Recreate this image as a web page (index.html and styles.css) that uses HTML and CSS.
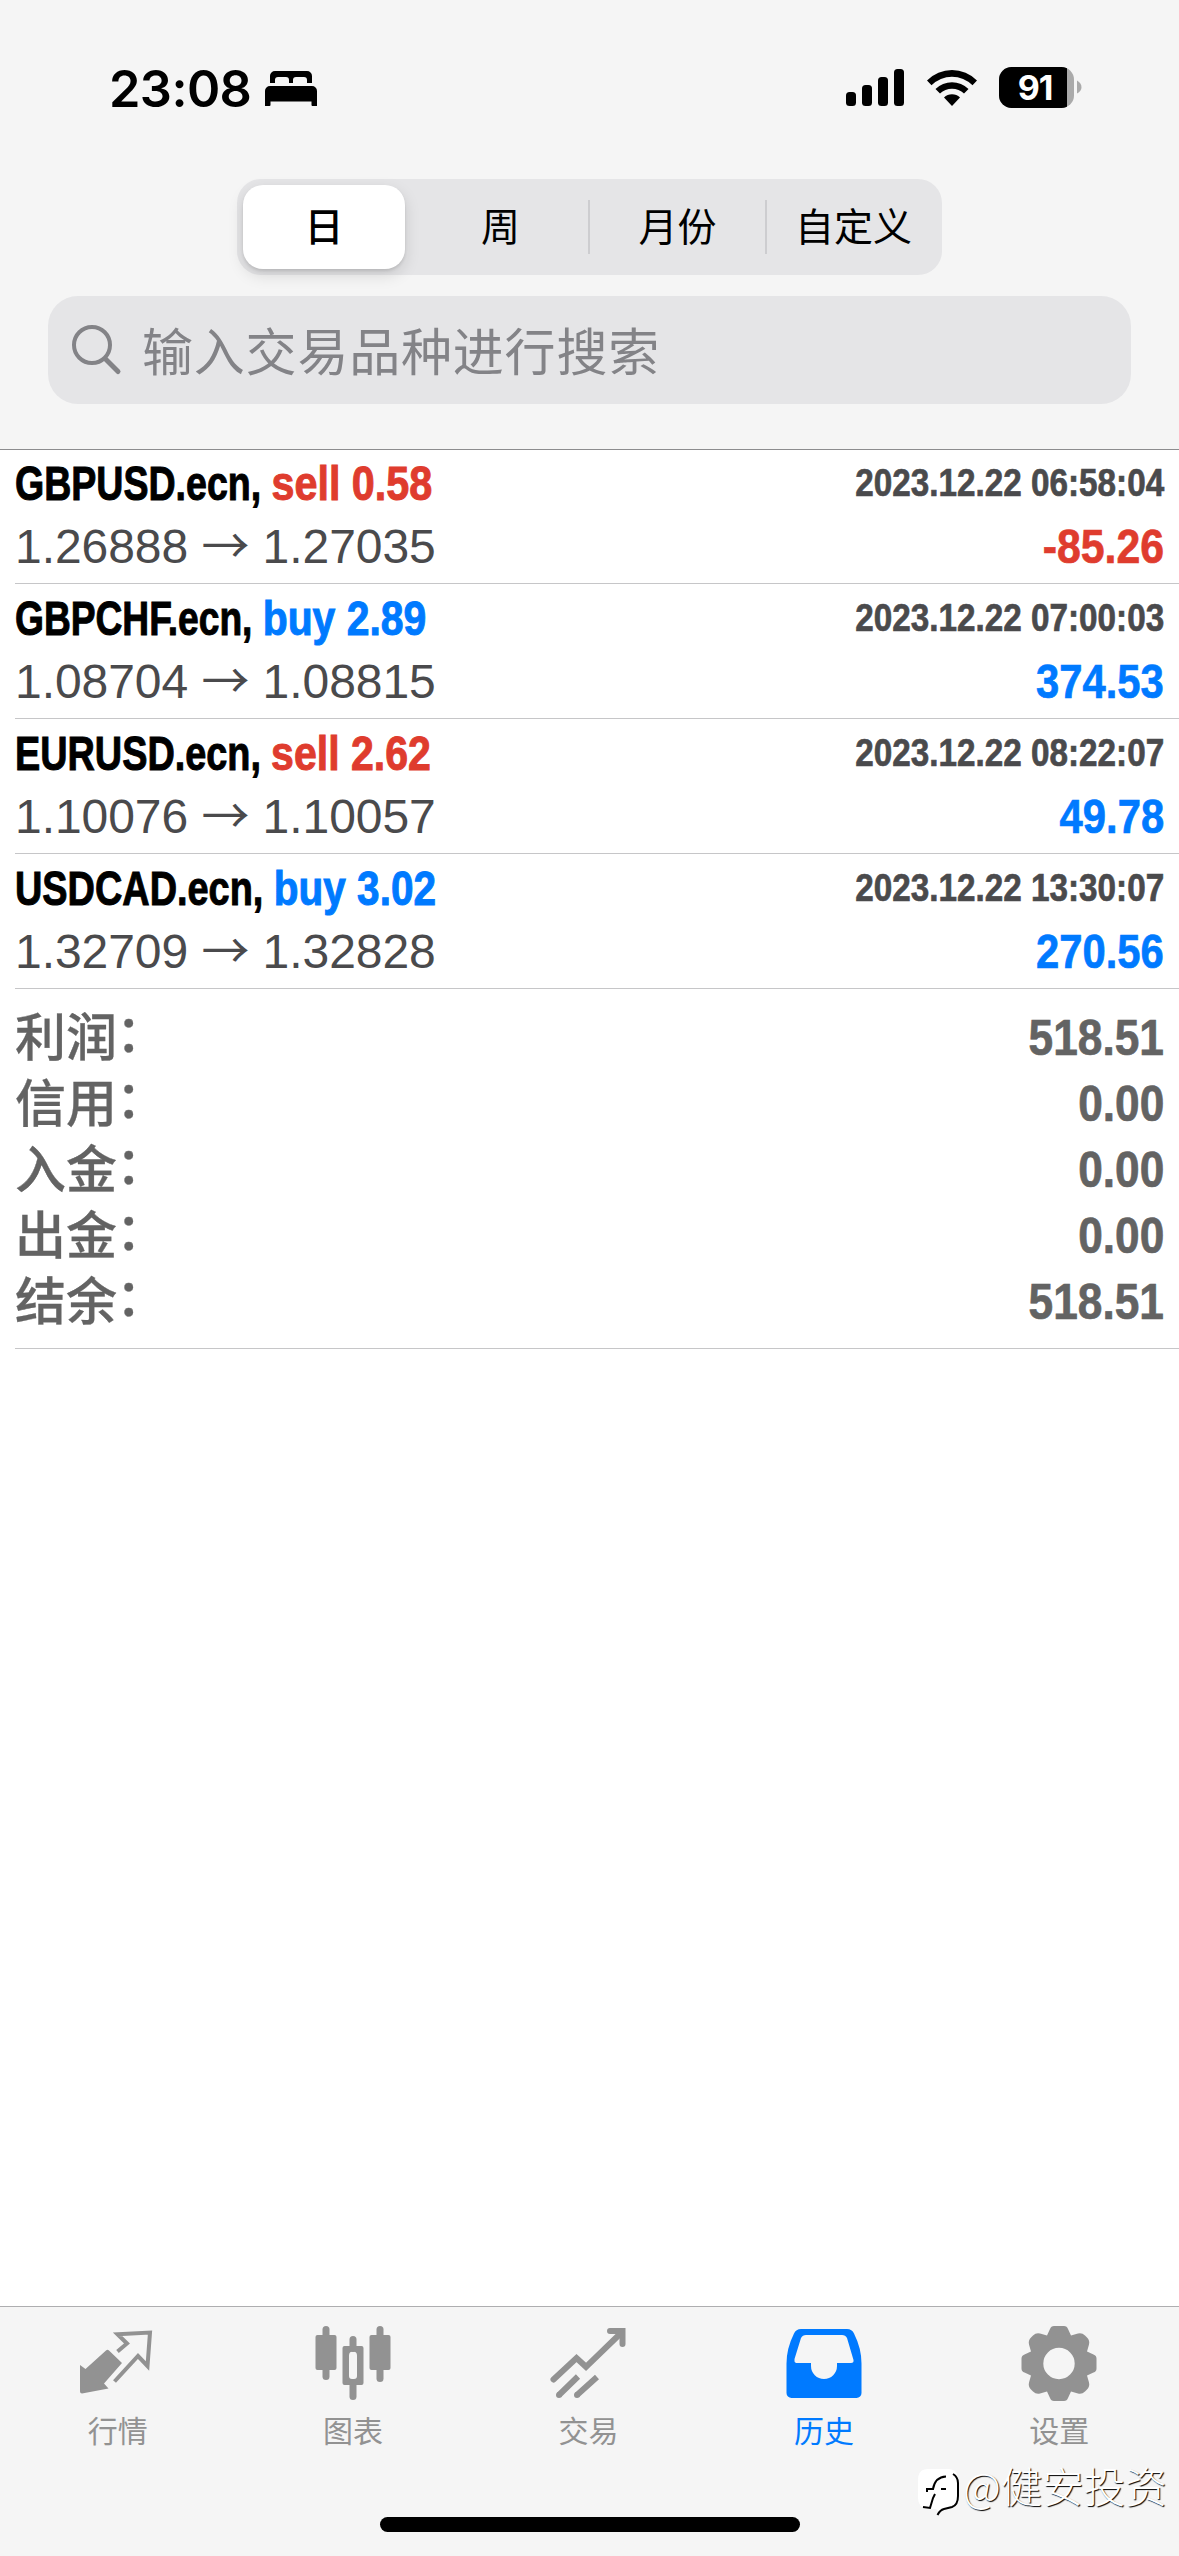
FILE: index.html
```html
<!DOCTYPE html>
<html lang="zh-CN">
<head>
<meta charset="utf-8">
<title>历史</title>
<link rel="stylesheet" href="styles.css">
</head>
<body>
<div class="screen">
  <header class="top">
    <div class="status">
      <span class="clock">23:08</span>
      <svg class="bed" width="52" height="36" viewBox="0 0 52 36"><path d="M5 12V5a5 5 0 0 1 5-5h32a5 5 0 0 1 5 5v7h-5V9a3 3 0 0 0-3-3h-8a3 3 0 0 0-3 3v3h-4V9a3 3 0 0 0-3-3h-8a3 3 0 0 0-3 3v3z"/><path d="M0 35V20a5 5 0 0 1 5-5h42a5 5 0 0 1 5 5v15h-4.500a1 1 0 0 1-1-1v-3.500h-41V34a1 1 0 0 1-1 1z"/></svg>
      <span class="grow"></span>
      <svg class="signal" width="58" height="37" viewBox="0 0 58 37"><rect x="0" y="23" width="10" height="14" rx="3.500"/><rect x="16" y="16" width="10" height="21" rx="3.500"/><rect x="32" y="8" width="10" height="29" rx="3.500"/><rect x="48" y="0" width="10" height="37" rx="3.500"/></svg>
      <svg class="wifi" width="50" height="37" viewBox="0 0 50 37"><path d="M0 11.500a35 35 0 0 1 50 0l-4.500 4.700a29 29 0 0 0-41 0z"/><path d="M8.500 20a23.500 23.500 0 0 1 33 0L37 24.600a17 17 0 0 0-24 0z"/><path d="M17 28.500a11.500 11.500 0 0 1 16 0L25 37z"/></svg>
      <svg class="battery" width="83" height="41" viewBox="0 0 83 41"><defs><clipPath id="b"><rect width="75" height="41" rx="12.500"/></clipPath></defs><g clip-path="url(#b)"><rect width="75" height="41" fill="#aaa"/><rect width="68" height="41"/></g><path d="M78 13.500c6 3.500 6 10 0 13z" fill="#aaa"/><text x="36" y="33" text-anchor="middle" class="level">91</text></svg>
    </div>
    <div class="segments">
      <span class="seg on">日</span><span class="seg">周</span><span class="seg line">月份</span><span class="seg line">自定义</span>
    </div>
    <div class="search">
      <svg width="50" height="50" viewBox="0 0 50 50" fill="none" stroke="#838387" stroke-linecap="round"><circle cx="20" cy="20" r="18" stroke-width="4"/><path d="M33.500 34L46 46.500" stroke-width="5"/></svg>
      <span>输入交易品种进行搜索</span>
    </div>
  </header>
  <main>
    <div class="deal"><div class="l"><b class="name">GBPUSD.ecn, <i class="sell">sell 0.58</i></b><time>2023.12.22 06:58:04</time></div><div class="l"><span class="price">1.26888 <span class="arrow">→</span> 1.27035</span><b class="sell">-85.26</b></div></div>
    <div class="deal"><div class="l"><b class="name">GBPCHF.ecn, <i class="buy">buy 2.89</i></b><time>2023.12.22 07:00:03</time></div><div class="l"><span class="price">1.08704 <span class="arrow">→</span> 1.08815</span><b class="buy">374.53</b></div></div>
    <div class="deal"><div class="l"><b class="name">EURUSD.ecn, <i class="sell">sell 2.62</i></b><time>2023.12.22 08:22:07</time></div><div class="l"><span class="price">1.10076 <span class="arrow">→</span> 1.10057</span><b class="buy">49.78</b></div></div>
    <div class="deal"><div class="l"><b class="name">USDCAD.ecn, <i class="buy">buy 3.02</i></b><time>2023.12.22 13:30:07</time></div><div class="l"><span class="price">1.32709 <span class="arrow">→</span> 1.32828</span><b class="buy">270.56</b></div></div>
    <div class="totals">
      <div class="t"><span>利润<em>：</em></span><b>518.51</b></div>
      <div class="t"><span>信用<em>：</em></span><b>0.00</b></div>
      <div class="t"><span>入金<em>：</em></span><b>0.00</b></div>
      <div class="t"><span>出金<em>：</em></span><b>0.00</b></div>
      <div class="t"><span>结余<em>：</em></span><b>518.51</b></div>
    </div>
  </main>
  <footer>
    <nav>
      <a class="tab"><svg viewBox="0 0 80 80"><path d="M31 22.500L44 35 26 55.500l4.500 5L4 65.500Q2 65.500 2 63.500V37l5.500 4L28 22.500q1.500-1.500 3 0z"/><path d="M39.500 23.500l9.500-8-9.500-9.300L72 4.500 69.500 38 60 28 36.500 53.500" fill="none" stroke="currentColor" stroke-width="4"/></svg><span>行情</span></a>
      <a class="tab"><svg viewBox="0 0 80 80"><rect x="2.500" y="7" width="21" height="35" rx="2"/><rect x="9.500" y="-2" width="7" height="54" rx="3.500"/><rect x="56.500" y="7" width="21" height="35" rx="2"/><rect x="63.500" y="-2" width="7" height="56" rx="3.500"/><rect x="36.500" y="8" width="7" height="16" rx="3.500"/><rect x="36.500" y="52" width="7" height="20" rx="3.500"/><path fill-rule="evenodd" d="M31.500 18h17a2 2 0 0 1 2 2v35a2 2 0 0 1-2 2h-17a2 2 0 0 1-2-2V20a2 2 0 0 1 2-2zM40 23.500a4 4 0 0 0-4 4V48a3 3 0 0 0 3 3h2a3 3 0 0 0 3-3V27.500a4 4 0 0 0-4-4z"/></svg><span>图表</span></a>
      <a class="tab"><svg viewBox="0 0 80 80"><g fill="none" stroke="currentColor" stroke-width="6"><path d="M5.500 51.500L28.500 30l9.500 8.800L73 5" stroke-linecap="round"/><path d="M62 3h12.500v13" stroke-linecap="round"/><path d="M11 67L30 48.500M29 67L49 49"/></g><circle cx="11" cy="67" r="3"/><circle cx="29" cy="67" r="3"/></svg><span>交易</span></a>
      <a class="tab active"><svg viewBox="0 0 80 80"><path fill-rule="evenodd" d="M17 1h46q5 0 7 4.500 7.500 15 7.500 30V65a5 5 0 0 1-5 5h-65a5 5 0 0 1-5-5V35.500q0-15 7.500-30Q12 1 17 1zM22 7q-3.500 0-5 3L10.500 31v2q0 2 3 2h13.500v3a13 13 0 0 0 26 0v-3h14q3 0 2.500-3L63 10q-1.500-3-5-3z"/></svg><span>历史</span></a>
      <a class="tab"><svg viewBox="0 0 80 80"><g transform="translate(40 35.500)"><path fill-rule="evenodd" d="M-5-37.500H5Q8-37.500 9-34.500L12-28 19-30Q23-31 26-28L28-26Q31-23 30-19L28-12 34.500-9Q37.500-8 37.500-5V5Q37.500 8 34.500 9L28 12 30 19Q31 23 28 26L26 28Q23 31 19 30L12 28 9 34.500Q8 37.500 5 37.500H-5Q-8 37.500-9 34.500L-12 28-19 30Q-23 31-26 28L-28 26Q-31 23-30 19L-28 12-34.500 9Q-37.500 8-37.500 5V-5Q-37.500-8-34.500-9L-28-12-30-19Q-31-23-28-26L-26-28Q-23-31-19-30L-12-28-9-34.500Q-8-37.500-5-37.500zM0-15.700a15.700 15.700 0 1 0 0 31.400 15.700 15.700 0 1 0 0-31.400z"/></g></svg><span>设置</span></a>
    </nav>
    <div class="home"></div>
  </footer>
  <div class="mark"><svg width="46" height="50" viewBox="0 0 46 50"><g transform="translate(0 6)"><path d="M11 3h20q10 0 10 11v17q0 9-6 10l-14 4-2-2h-8Q1 42 1 32V14Q1 3 11 3z" fill="#fff"/><path d="M36 8q5 3 5 9v13q0 9-6 11l-8 2q-4 1-6.500 6M10 26v-3h6q2-12 13-12.500M6 41l7 1 3-10 2-4M24 23h5" fill="none" stroke="#000" stroke-width="2"/></g></svg><span>@健安投资</span></div>
</div>
</body>
</html>
```
FILE: styles.css
```css
* { box-sizing: border-box; }
body { margin: 0; background: #fff; font-family: "Liberation Sans", "Noto Sans CJK SC", sans-serif; }
.screen { position: relative; width: 1179px; height: 2556px; display: flex; flex-direction: column; overflow: hidden; background: #fff; }
svg { display: block; flex: none; overflow: visible; }
.top { flex: none; height: 450px; background: #f5f5f5; border-bottom: 1px solid #8c8c8e; display: flex; flex-direction: column; }
.status { height: 179px; padding: 67px 97px 0 109px; display: flex; align-items: flex-start; }
.clock { font: 600 50.500px/52px Inter, sans-serif; margin-top: -4px; width: 156px; letter-spacing: -0.600px; white-space: nowrap; }
.bed { margin-top: 4px; }
.grow { flex: 1; }
.signal { margin: 2px 23px 0 0; }
.wifi { margin: 2px 22px 0 0; }
.battery { margin-top: 0; }
.level { font: 700 34px Inter, sans-serif; fill: #fff; letter-spacing: -1px; }
.segments { width: 705px; height: 96px; margin: 0 auto; padding: 6px; display: grid; grid-template-columns: 162px repeat(3, 177px); background: #e5e5e7; border-radius: 24px; }
.seg { display: flex; align-items: center; justify-content: center; font: 400 39px/1 "Noto Sans CJK SC", sans-serif; padding-bottom: 5px; }
.seg:nth-child(2) { padding-left: 14px; }
.seg.on { font-weight: 500; background: #fff; border-radius: 20px; box-shadow: 0 6px 16px rgba(0,0,0,.13), 0 2px 3px rgba(0,0,0,.1); }
.seg.line { background: linear-gradient(#cdcdd0, #cdcdd0) 6px 50% / 2px 54px no-repeat; padding-left: 14px; }
.seg.line:last-child { padding-left: 12px; }
.search { width: 1083px; height: 108px; margin: 21px auto 0; border-radius: 30px; background: #e5e5e7; padding: 0 24px; display: flex; align-items: center; gap: 20px; color: #838387; font: 400 51px/1 "Noto Sans CJK SC", sans-serif; letter-spacing: 0.800px; }
.search span { padding-bottom: 2px; }
main { flex: 1; padding-left: 15px; }
.deal { height: 135px; padding: 3px 15px 0 0; border-bottom: 1px solid #c6c6c8; }
.deal:first-child { height: 134px; padding-top: 2px; }
.l { display: flex; justify-content: space-between; align-items: flex-start; height: 63px; line-height: 63px; font-size: 48px; }
b, time { font-weight: 700; white-space: pre; transform: scaleX(.87); transform-origin: right; -webkit-text-stroke: 0.700px currentColor; }
.l > .sell { transform: scaleX(.892); }
i { display: inline-block; font-style: normal; transform: scaleX(1.1); transform-origin: left; }
.name { transform: scaleX(.782); transform-origin: left; -webkit-text-stroke: 1px currentColor; }
.deal:nth-child(2) .name { transform: scaleX(.774); }
.deal:nth-child(3) .name { transform: scaleX(.788); }
.deal:nth-child(4) .name { transform: scaleX(.789); }
.deal:nth-child(3) i { transform: scaleX(1.085); }
.deal:nth-child(4) i { transform: scaleX(1.07); }
time { font-size: 39px; line-height: 61px; color: #4a4a4c; transform: scaleX(.853); }
.price { color: #4a4a4c; white-space: pre; letter-spacing: -0.060px; }
.arrow { font-family: "Noto Sans CJK SC", sans-serif; line-height: 1; }
.sell { color: #df3c2e; }
.buy { color: #007aff; }
.totals { height: 360px; padding: 15px 15px 0 0; border-bottom: 1px solid #c6c6c8; }
.t { height: 66px; display: flex; justify-content: space-between; align-items: flex-start; color: #636363; }
.t span { font: 500 51px/60px "Noto Sans CJK SC", sans-serif; -webkit-text-stroke: 0.300px #636363; }
.t em { display: inline-block; font-style: normal; transform: translate(-1px, -4px); }
.t b { font-size: 50px; line-height: 68px; transform: scaleX(.885); }
footer { flex: none; height: 250px; border-top: 1px solid #aeaeb0; background: #f5f5f5; display: flex; flex-direction: column; align-items: center; }
nav { width: 100%; height: 210px; padding-right: 2px; display: grid; grid-template-columns: repeat(5, 1fr); }
.tab { display: flex; flex-direction: column; align-items: center; color: #929292; padding-top: 21px; }
.tab svg { width: 80px; height: 80px; fill: currentColor; }
.tab span { font: 400 30px/40px "Noto Sans CJK SC", sans-serif; margin-top: 1px; }
.tab.active { color: #007aff; }
.home { width: 420px; height: 15px; border-radius: 8px; background: #000; }
.mark { position: absolute; left: 917px; top: 2458px; display: flex; align-items: center; color: #fff; font: 300 41.500px/54px "Noto Sans CJK SC", sans-serif; text-shadow: 1px 1px 1px #000; white-space: nowrap; }
```
